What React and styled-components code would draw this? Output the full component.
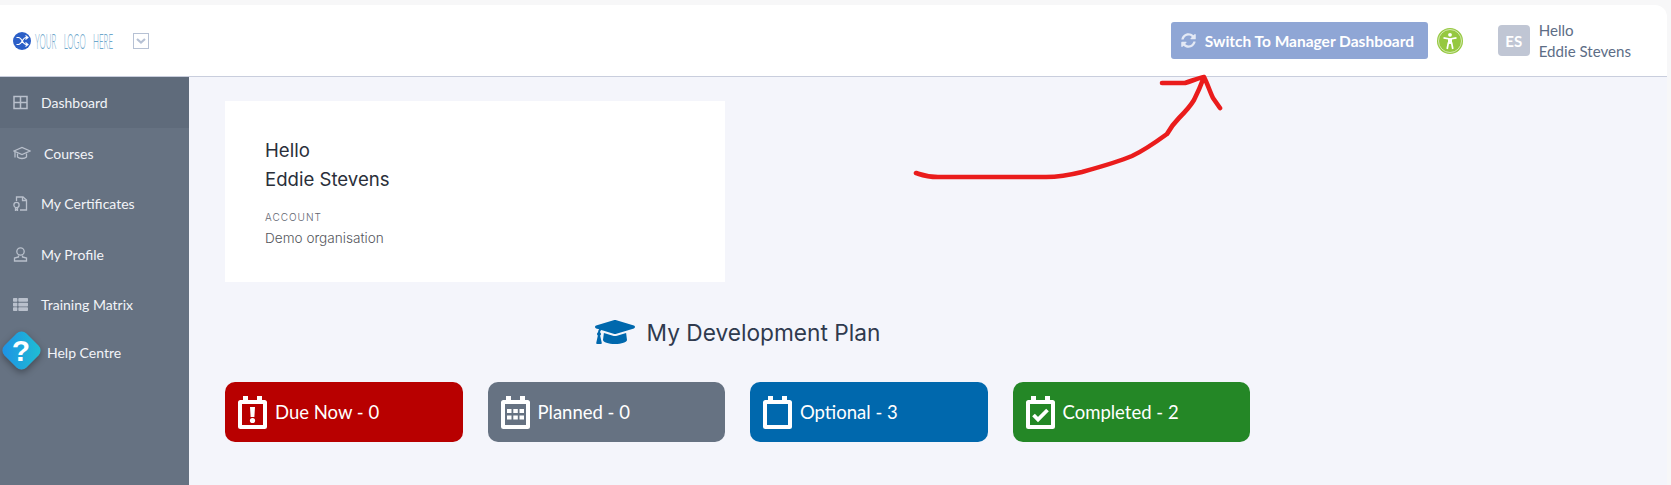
import React from "react";
import styled, { createGlobalStyle } from "styled-components";
import { FaGraduationCap, FaSyncAlt, FaThList } from "react-icons/fa";

const GlobalStyle = createGlobalStyle`
  html, body {
    margin: 0;
    padding: 0;
    height: 100%;
    background: #f7f7f8;
    font-family: "Lato", "Open Sans", sans-serif;
  }
  * {
    box-sizing: border-box;
  }
`;

const Page = styled.div`
  position: relative;
  width: 1671px;
  height: 485px;
  overflow: hidden;
  padding: 5px 4px 0 0;
  display: flex;
  flex-direction: column;
  background: #f7f7f8;
`;

const Header = styled.header`
  flex: 0 0 71px;
  display: flex;
  align-items: center;
  background: #fff;
  border-top-right-radius: 12px;
  padding: 0 36px 0 13px;
`;

const LogoMark = styled.svg`
  width: 102px;
  height: 20px;
  overflow: visible;
`;

const Caret = styled.div`
  width: 16px;
  height: 16px;
  margin-left: 18px;
  border: 1px solid #b6c1d4;
  display: flex;
  align-items: center;
  justify-content: center;
`;

const HeaderRight = styled.div`
  margin-left: auto;
  display: flex;
  align-items: center;
`;

const SwitchButton = styled.button`
  width: 257px;
  height: 37px;
  border: 0;
  border-radius: 3px;
  background: #8fa6d5;
  color: #fff;
  display: flex;
  align-items: center;
  gap: 9px;
  padding: 0 10px;
  white-space: nowrap;
  font: 700 15.5px "Lato", sans-serif;
`;

const Access = styled.svg`
  width: 26px;
  height: 26px;
  margin-left: 9px;
`;

const Avatar = styled.div`
  width: 32px;
  height: 31px;
  margin-left: 35px;
  border-radius: 4px;
  background: #c0c6d4;
  color: #fff;
  font-weight: 700;
  font-size: 15px;
  display: flex;
  align-items: center;
  justify-content: center;
`;

const UserName = styled.div`
  margin-left: 9px;
  font-size: 15.1px;
  line-height: 20.5px;
  color: #5d6d86;
`;

const Body = styled.div`
  flex: 1;
  display: flex;
  background: #f4f5fb;
  border-top: 1px solid #c9cedd;
`;

const Sidebar = styled.nav`
  position: relative;
  width: 189px;
  background: #667282;
`;

const NavItem = styled.div`
  height: 50.5px;
  display: flex;
  align-items: center;
  padding: 1px 0 0 13px;
  gap: 13px;
  color: #f2f4f8;
  font-size: 14px;
  background: ${(p) => (p.$active ? "#5f6b7b" : "transparent")};
  svg {
    color: #b9c0cc;
    flex: none;
  }
`;

const HelpItem = styled(NavItem)`
  height: 44px;
  padding-left: 47px;
`;

const Diamond = styled.div`
  position: absolute;
  left: 6px;
  top: 258px;
  width: 31px;
  height: 31px;
  border-radius: 7px;
  transform: rotate(45deg);
  background: linear-gradient(45deg, #1e90e6, #1fc0d2);
  box-shadow: 2px 2px 7px rgba(0, 0, 0, 0.35);
  display: flex;
  align-items: center;
  justify-content: center;
`;

const Question = styled.span`
  transform: rotate(-45deg);
  color: #fff;
  font: 700 30px "Liberation Sans", sans-serif;
`;

const Main = styled.main`
  flex: 1;
  padding: 24px 0 0 36px;
`;

const Content = styled.div`
  width: 1025px;
  display: grid;
  grid-template-columns: repeat(4, 1fr);
  column-gap: 25px;
`;

const WelcomeCard = styled.section`
  grid-column: span 2;
  height: 181px;
  background: #fff;
  padding: 35px 40px;
`;

const Greeting = styled.div`
  font-family: "Inter", sans-serif;
  font-size: 18.6px;
  line-height: 29px;
  color: #2a2f3a;
`;

const AccountLabel = styled.div`
  margin-top: 17px;
  font-family: "Inter", sans-serif;
  font-weight: 300;
  font-size: 10px;
  letter-spacing: 1px;
  color: #5f6570;
`;

const AccountName = styled.div`
  margin-top: 7px;
  font-family: "Inter", sans-serif;
  font-weight: 300;
  font-size: 13.6px;
  color: #55565c;
`;

const PlanHeading = styled.h2`
  grid-column: 1 / -1;
  height: 100px;
  margin: 0;
  display: flex;
  align-items: center;
  justify-content: center;
  gap: 12px;
  font: 400 22.7px "Inter", sans-serif;
  color: #2f3a4e;
  svg {
    color: #0068ad;
  }
`;

const StatusCard = styled.div`
  height: 60px;
  border-radius: 10px;
  background: ${(p) => p.$color};
  color: #fff;
  display: flex;
  align-items: center;
  gap: 8px;
  padding-left: 13px;
  font-size: 18.5px;
`;

const ArrowLayer = styled.svg`
  position: absolute;
  left: 0;
  top: 0;
  width: 1671px;
  height: 485px;
  pointer-events: none;
`;

function GridIcon() {
  return (
    <svg width="15" height="15" viewBox="0 0 15 15" fill="none" stroke="currentColor" strokeWidth="1.500">
      <rect x="1" y="1.500" width="13" height="12" />
      <path d="M7.500 1.500v12M1 7.500h13" />
    </svg>
  );
}

function CapIcon() {
  return (
    <svg width="18" height="15" viewBox="0 0 18 15" fill="none" stroke="currentColor" strokeWidth="1.300">
      <path d="M1 5l8-3.500L17 5 9 8.500z" />
      <path d="M4.500 7.500v3.500c2 2 7 2 9 0V7.500M2 5.500v6" />
    </svg>
  );
}

function CertIcon() {
  return (
    <svg width="15" height="15" viewBox="0 0 15 15" fill="none" stroke="currentColor" strokeWidth="1.300">
      <path d="M3.500 5V1h6.500l3.500 3v10H7" />
      <path d="M9.500 1v3.500h4" />
      <circle cx="3.500" cy="9" r="2.600" />
      <path d="M2.500 11.500V14.500L3.500 13.500 4.500 14.500V11.500" />
    </svg>
  );
}

function ProfileIcon() {
  return (
    <svg width="15" height="15" viewBox="0 0 15 15" fill="none" stroke="currentColor" strokeWidth="1.300">
      <circle cx="7.500" cy="4.500" r="3.700" />
      <path d="M5.500 8.500v1.500L1.500 11v3h12v-3L9.500 10V8.500" />
    </svg>
  );
}

function Calendar({ children }) {
  return (
    <svg width="29" height="33" viewBox="0 0 29 33" fill="none">
      <path
        d="M5 0h5v4h9V0h5v4h2.500A2.500 2.500 0 0 1 29 6.500V30.500A2.500 2.500 0 0 1 26.500 33H2.500A2.500 2.500 0 0 1 0 30.500V6.500A2.500 2.500 0 0 1 2.500 4H5z"
        fill="#fff"
      />
      <rect x="4" y="8" width="21" height="21" fill={"var(--card)"} />
      {children}
    </svg>
  );
}

const statuses = [
  {
    label: "Due Now - 0",
    color: "#b80000",
    mark: (
      <>
        <path d="M12 11h5l-.6 10h-3.800z" fill="#fff" />
        <circle cx="14.500" cy="24.500" r="2.600" fill="#fff" />
      </>
    ),
  },
  {
    label: "Planned - 0",
    color: "#667282",
    mark: (
      <g fill="#fff">
        <rect x="6" y="13" width="4.500" height="4" />
        <rect x="12.300" y="13" width="4.500" height="4" />
        <rect x="18.500" y="13" width="4.500" height="4" />
        <rect x="6" y="19.500" width="4.500" height="4" />
        <rect x="12.300" y="19.500" width="4.500" height="4" />
        <rect x="18.500" y="19.500" width="4.500" height="4" />
      </g>
    ),
  },
  { label: "Optional - 3", color: "#0068ad", mark: null },
  {
    label: "Completed - 2",
    color: "#248726",
    mark: <path d="M7.500 19l4.500 4.500L21.500 14" stroke="#fff" strokeWidth="3.800" fill="none" />,
  },
];

export default function App() {
  return (
    <Page>
      <GlobalStyle />
      <Header>
        <LogoMark viewBox="0 0 102 20">
          <circle cx="9" cy="10" r="9" fill="#2b5fc7" />
          <path
            d="M3.500 6.500h2c3.500 0 4 7 7.500 7h2M3.500 13.500h2c3.500 0 4-7 7.500-7h2M12.500 4.500l2.500 2-2.500 2M12.500 11.500l2.500 2-2.500 2"
            stroke="#fff"
            strokeWidth="1.100"
            fill="none"
          />
          <text
            x="22"
            y="17.500"
            fontFamily="Lato"
            fontWeight="300"
            fontSize="21"
            fill="#6ea8cc"
            wordSpacing="14"
            textLength="78"
            lengthAdjust="spacingAndGlyphs"
          >
            YOUR LOGO HERE
          </text>
        </LogoMark>
        <Caret>
          <svg width="10" height="6" viewBox="0 0 10 6">
            <path d="M1 1l4 3.500L9 1" stroke="#b6c1d4" strokeWidth="2.200" fill="none" />
          </svg>
        </Caret>
        <HeaderRight>
          <SwitchButton>
            <FaSyncAlt size={15} color="#e4e9f5" />
            Switch To Manager Dashboard
          </SwitchButton>
          <Access viewBox="0 0 26 26">
            <circle cx="13" cy="13" r="13" fill="#95c83f" />
            <circle cx="13" cy="13" r="11.500" fill="none" stroke="#e6f3cf" strokeWidth="0.800" />
            <circle cx="13" cy="6.800" r="1.900" fill="#fff" />
            <path
              d="M6.500 9.800L13 11l6.500-1.200M13 11v4.500M10.200 21L11.300 15h3.400L15.800 21"
              stroke="#fff"
              strokeWidth="1.700"
              fill="none"
            />
            <rect x="11" y="10.800" width="4" height="5" fill="#fff" />
          </Access>
          <Avatar>ES</Avatar>
          <UserName>
            Hello
            <br />
            Eddie Stevens
          </UserName>
        </HeaderRight>
      </Header>
      <Body>
        <Sidebar>
          <NavItem $active>
            <GridIcon />
            Dashboard
          </NavItem>
          <NavItem>
            <CapIcon />
            Courses
          </NavItem>
          <NavItem>
            <CertIcon />
            My Certificates
          </NavItem>
          <NavItem>
            <ProfileIcon />
            My Profile
          </NavItem>
          <NavItem>
            <FaThList size={15} />
            Training Matrix
          </NavItem>
          <HelpItem>Help Centre</HelpItem>
          <Diamond>
            <Question>?</Question>
          </Diamond>
        </Sidebar>
        <Main>
          <Content>
            <WelcomeCard>
              <Greeting>Hello</Greeting>
              <Greeting>Eddie Stevens</Greeting>
              <AccountLabel>ACCOUNT</AccountLabel>
              <AccountName>Demo organisation</AccountName>
            </WelcomeCard>
            <PlanHeading>
              <FaGraduationCap size={40} />
              My Development Plan
            </PlanHeading>
            {statuses.map((s) => (
              <StatusCard key={s.label} $color={s.color} style={{ "--card": s.color }}>
                <Calendar>{s.mark}</Calendar>
                {s.label}
              </StatusCard>
            ))}
          </Content>
        </Main>
      </Body>
      <ArrowLayer viewBox="0 0 1671 485" fill="none">
        <path
          d="M916 173C922 175 926 177 938 177L1046 177C1060 177 1070 175 1082 172C1100 167 1118 162 1132 156C1145 150 1156 142 1167 134C1171 127 1175 122 1179 118C1186 111 1191 105 1194 100C1198 92 1201 85 1204 77C1208 85 1210 92 1213 98L1220 108M1162 83L1185 83C1192 81 1198 78 1204 77"
          stroke="#ea1c1c"
          strokeWidth="4.600"
          strokeLinecap="round"
          strokeLinejoin="round"
        />
      </ArrowLayer>
    </Page>
  );
}
